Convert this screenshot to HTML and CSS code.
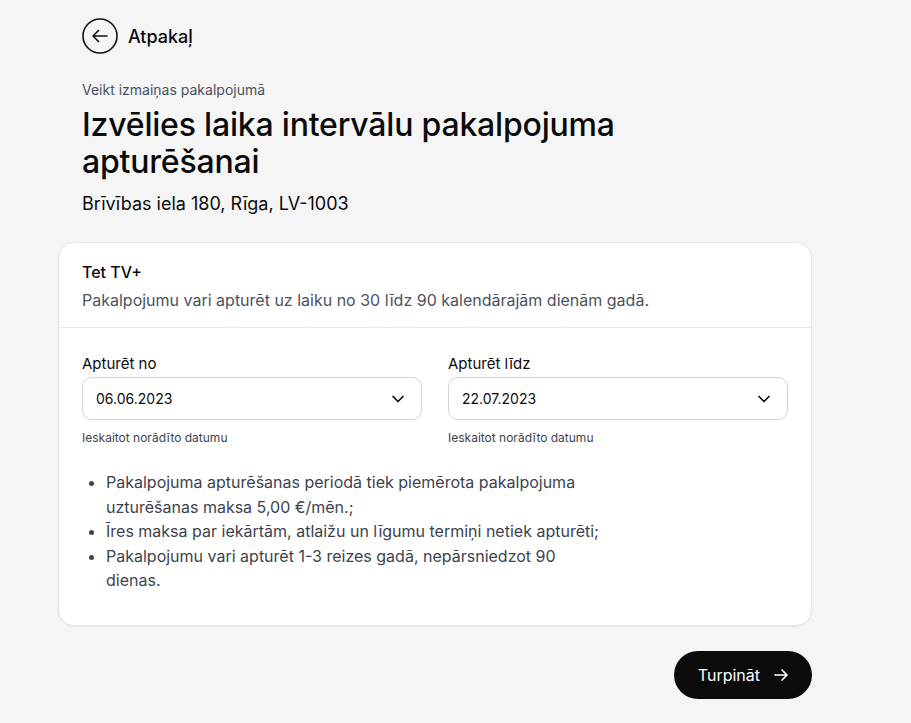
FILE: index.html
```html
<!DOCTYPE html>
<html lang="lv">
<head>
<meta charset="utf-8">
<title>Pakalpojuma apturēšana</title>
<link rel="stylesheet" href="styles.css">
</head>
<body>
<main class="page">
  <a class="back" href="#">
    <span class="back-icon">
      <svg width="36" height="36" viewBox="0 0 36 36" fill="none" stroke="#111" stroke-width="1.6" stroke-linecap="round" stroke-linejoin="round">
        <circle cx="18" cy="18" r="17"/>
        <path d="M25 18H11M16.5 12.5L11 18l5.5 5.5"/>
      </svg>
    </span>
    <span class="back-label">Atpakaļ</span>
  </a>

  <p class="eyebrow">Veikt izmaiņas pakalpojumā</p>
  <h1 class="title">Izvēlies laika intervālu pakalpojuma apturēšanai</h1>
  <p class="address">Brīvības iela 180, Rīga, LV-1003</p>

  <section class="card">
    <div class="card-head">
      <h2 class="card-title">Tet TV+</h2>
      <p class="card-desc">Pakalpojumu vari apturēt uz laiku no 30 līdz 90 kalendārajām dienām gadā.</p>
    </div>
    <div class="card-body">
      <div class="fields">
        <div class="field">
          <label class="field-label">Apturēt no</label>
          <div class="select">
            <span>06.06.2023</span>
            <svg width="16" height="16" viewBox="0 0 16 16" fill="none" stroke="#111" stroke-width="1.7" stroke-linecap="round" stroke-linejoin="round"><path d="M3 5.5l5 5 5-5"/></svg>
          </div>
          <p class="hint">Ieskaitot norādīto datumu</p>
        </div>
        <div class="field">
          <label class="field-label">Apturēt līdz</label>
          <div class="select">
            <span>22.07.2023</span>
            <svg width="16" height="16" viewBox="0 0 16 16" fill="none" stroke="#111" stroke-width="1.7" stroke-linecap="round" stroke-linejoin="round"><path d="M3 5.5l5 5 5-5"/></svg>
          </div>
          <p class="hint">Ieskaitot norādīto datumu</p>
        </div>
      </div>
      <ul class="notes">
        <li>Pakalpojuma apturēšanas periodā tiek piemērota pakalpojuma uzturēšanas maksa 5,00 €/mēn.;</li>
        <li>Īres maksa par iekārtām, atlaižu un līgumu termiņi netiek apturēti;</li>
        <li>Pakalpojumu vari apturēt 1-3 reizes gadā, nepārsniedzot 90 dienas.</li>
      </ul>
    </div>
  </section>

  <div class="actions">
    <button class="btn-primary" type="button">
      <span>Turpināt</span>
      <svg width="18" height="18" viewBox="0 0 18 18" fill="none" stroke="#fff" stroke-width="1.7" stroke-linecap="round" stroke-linejoin="round"><path d="M3 9h12M10 4l5 5-5 5"/></svg>
    </button>
  </div>
</main>
</body>
</html>
```

FILE: styles.css
```css
* { box-sizing: border-box; }

html, body {
  margin: 0;
  padding: 0;
  background: #f5f5f5;
  color: #0b0b0c;
  font-family: "Inter", "Liberation Sans", sans-serif;
}

.page {
  width: 754px;
  margin-left: 58px;
  padding-top: 18px;
}

.back {
  display: inline-flex;
  align-items: center;
  gap: 10px;
  margin-left: 24px;
  color: #0b0b0c;
  text-decoration: none;
}

.back-icon {
  display: flex;
  width: 36px;
  height: 36px;
}

.back-label {
  font-size: 18px;
  font-weight: 500;
}

.eyebrow {
  margin: 23px 0 0 24px;
  font-size: 14px;
  line-height: 18px;
  color: #4b5260;
}

.title {
  margin: 7px 0 0 24px;
  width: 580px;
  font-size: 32px;
  line-height: 37px;
  font-weight: 500;
  letter-spacing: -0.2px;
}

.address {
  margin: 12px 0 0 24px;
  font-size: 18px;
  line-height: 24px;
}

.card {
  margin-top: 26px;
  background: #fff;
  border: 1px solid #e6e6e6;
  border-radius: 16px;
  box-shadow: 0 1px 2px rgba(0,0,0,0.06);
}

.card-head {
  padding: 19px 23px 17px;
  border-bottom: 1px solid #e8e8e8;
}

.card-title {
  margin: 0;
  font-size: 16px;
  line-height: 20px;
  font-weight: 500;
}

.card-desc {
  margin: 8px 0 0;
  font-size: 16px;
  line-height: 20px;
  color: #4b5260;
}

.card-body {
  padding: 27px 23px 32px;
}

.fields {
  display: grid;
  grid-template-columns: 1fr 1fr;
  gap: 26px;
}

.field-label {
  display: block;
  font-size: 15px;
  line-height: 18px;
  font-weight: 400;
}

.select {
  margin-top: 4px;
  height: 43px;
  padding: 0 15px 0 13px;
  display: flex;
  align-items: center;
  justify-content: space-between;
  border: 1px solid #cfd3d9;
  border-radius: 10px;
  background: #fff;
  font-size: 14px;
}

.hint {
  margin: 11px 0 0;
  font-size: 12px;
  line-height: 14px;
  color: #3d434d;
}

.notes {
  margin: 25px 0 0;
  padding-left: 24px;
  max-width: 529px;
  font-size: 16px;
  line-height: 24.5px;
  color: #3d434d;
}

.actions {
  display: flex;
  justify-content: flex-end;
  margin-top: 25px;
}

.btn-primary {
  display: inline-flex;
  align-items: center;
  gap: 12px;
  height: 48px;
  padding: 0 22px 0 24px;
  border: none;
  border-radius: 24px;
  background: #0b0b0c;
  color: #fff;
  font-family: inherit;
  font-size: 16px;
  font-weight: 400;
}
```
